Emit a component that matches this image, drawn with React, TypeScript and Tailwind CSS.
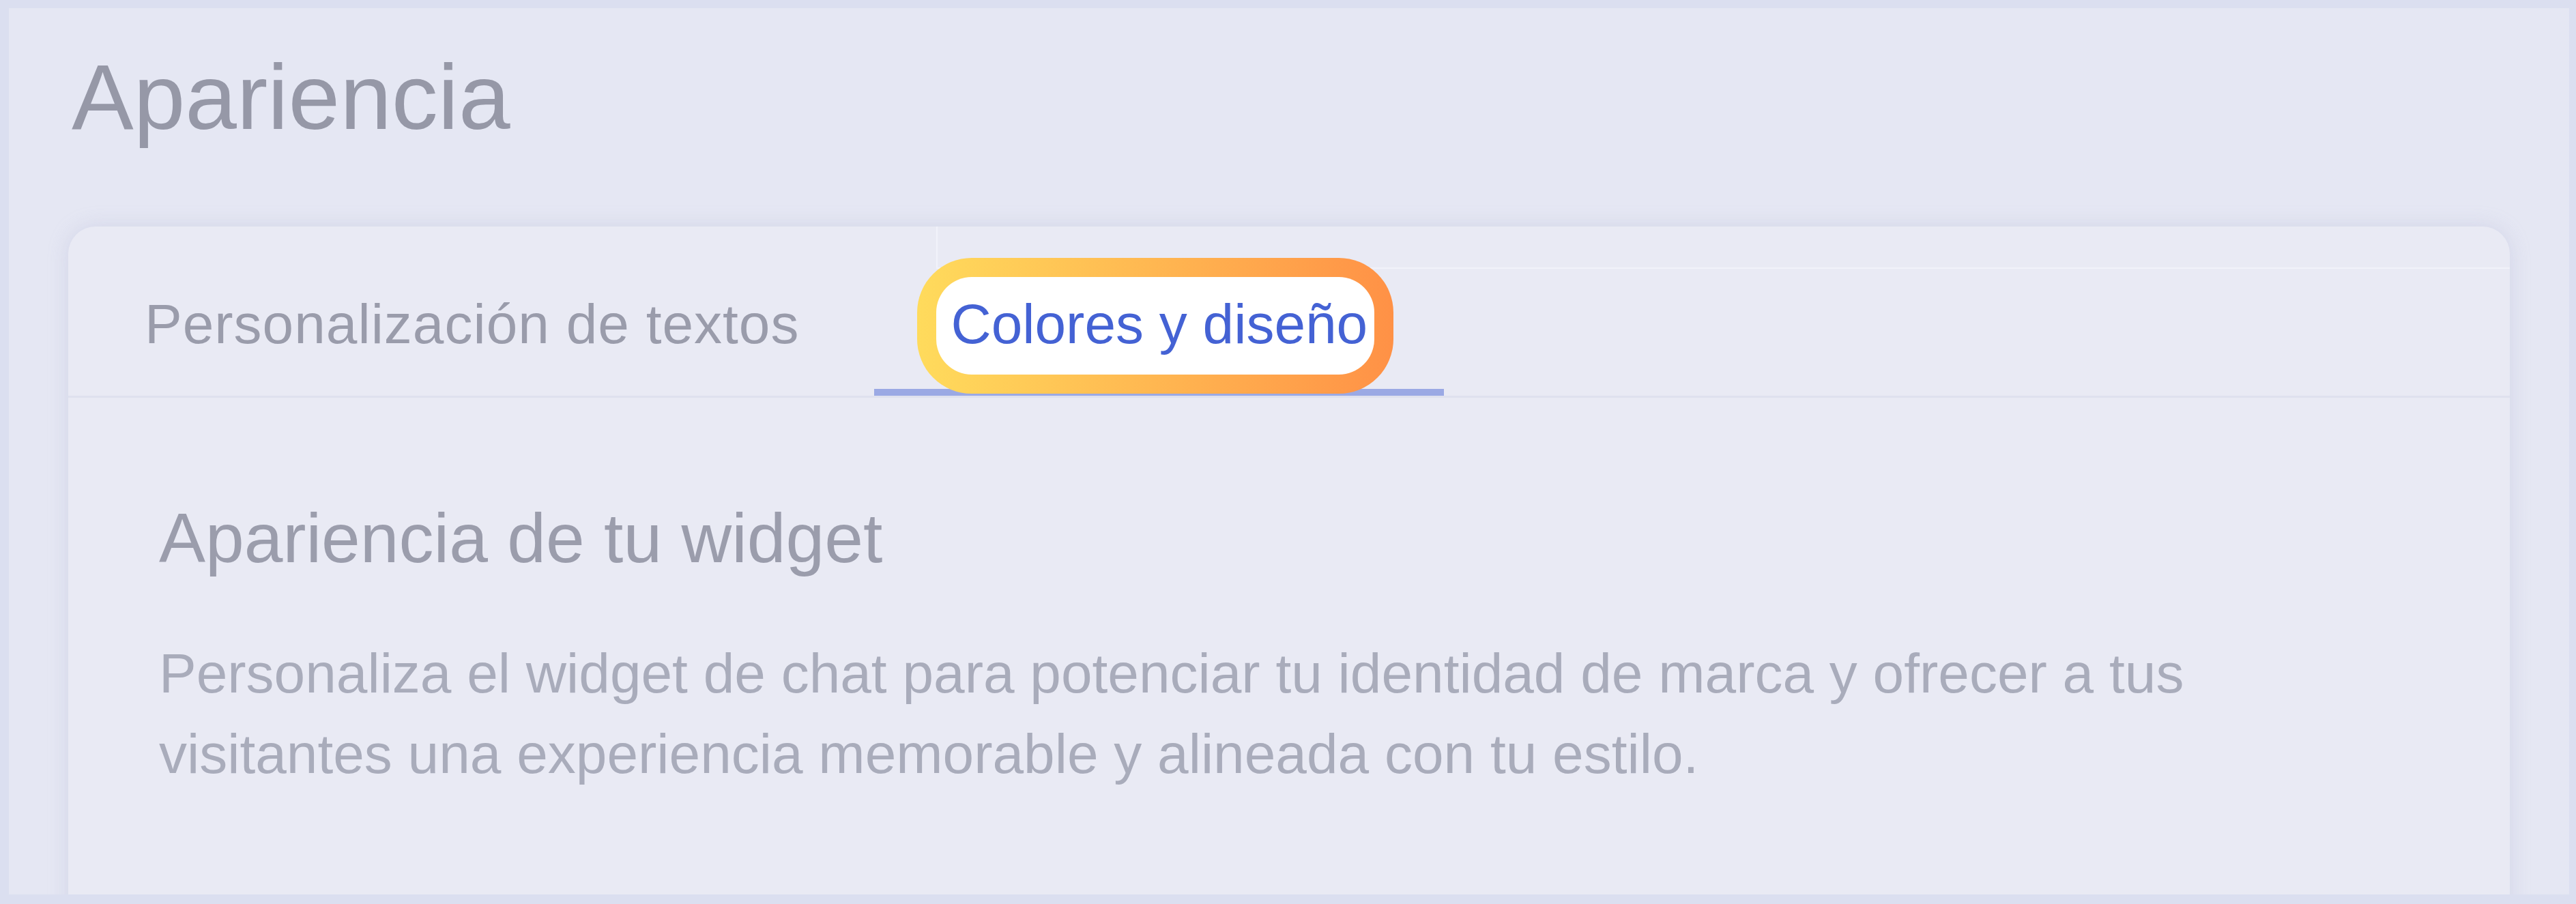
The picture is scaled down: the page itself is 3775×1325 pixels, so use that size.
import React from "react";

export default function App() {
  return (
    <div className="h-[1325px] w-[3775px] overflow-hidden bg-[#dbdff0] pt-[12px] pb-[14px] pl-[13px] pr-[10px] font-['Liberation_Sans',Arial,sans-serif]">
      <div className="h-full overflow-hidden bg-[#e5e7f3] px-[87px] pt-[62px]">
        <h1 className="ml-[5px] text-[136px] leading-none font-normal text-[#9698a7]">
          Apariencia
        </h1>

        <div className="relative mt-[122px] h-[1200px] rounded-t-[40px] bg-[#e9eaf4] shadow-[0_0_30px_rgba(160,166,205,0.28)]">
          {/* faint seam lines */}
          <div className="pointer-events-none absolute left-[1272px] right-0 top-0 h-[62px] border-l-2 border-b-2 border-[#f3f4fb]/80" />

          {/* tabs */}
          <div className="relative flex border-b-[3px] border-[#dfe1ee]">
            <button className="pl-[112px] pr-[110px] pt-[102px] pb-[54px] border-b-[10px] border-transparent text-[82px] leading-none tracking-[1px] text-[#9a9cab]">
              Personalización de textos
            </button>
            <button className="relative px-[112px] pt-[102px] pb-[54px] border-b-[10px] border-[#9ba9e4] text-[82px] leading-none text-[#4462d4]">
              <span className="absolute left-[63px] top-[46px] h-[199px] w-[698px] rounded-[80px] bg-gradient-to-r from-[#ffdb5c] to-[#ff9146] p-[28px]">
                <span className="block h-full w-full rounded-[52px] bg-white" />
              </span>
              <span className="relative">Colores y diseño</span>
            </button>
          </div>

          {/* body */}
          <div className="px-[133px] pt-[155px]">
            <h2 className="text-[102px] leading-none font-normal text-[#9b9dac]">
              Apariencia de tu widget
            </h2>
            <p className="mt-[88px] max-w-[3150px] text-[82px] leading-[118px] text-[#a9acbb]">
              Personaliza el widget de chat para potenciar tu identidad de marca y ofrecer a tus
              visitantes una experiencia memorable y alineada con tu estilo.
            </p>
          </div>
        </div>
      </div>
    </div>
  );
}
